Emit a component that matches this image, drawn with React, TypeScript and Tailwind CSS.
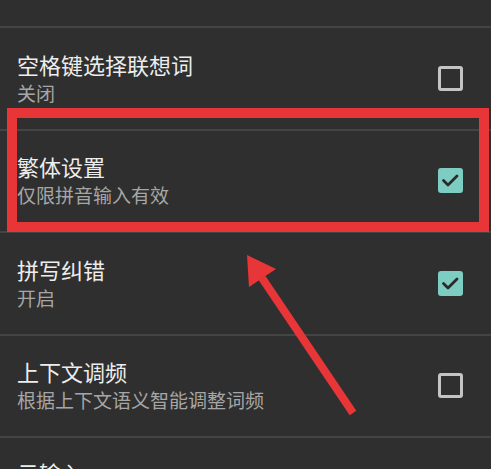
import React from "react";

type Setting = {
  title: string;
  summary: string;
  checked: boolean;
};

const settings: Setting[] = [
  { title: "空格键选择联想词", summary: "关闭", checked: false },
  { title: "繁体设置", summary: "仅限拼音输入有效", checked: true },
  { title: "拼写纠错", summary: "开启", checked: true },
  { title: "上下文调频", summary: "根据上下文语义智能调整词频", checked: false },
];

function CheckBox({ checked }: { checked: boolean }) {
  if (checked) {
    return (
      <div className="w-[25px] h-[25px] rounded-[3px] bg-[#7ecdc3]">
        <svg width="25" height="25" viewBox="0 0 25 25" fill="none">
          <path
            d="M5.5 12.5 L10 17 L19 8"
            stroke="#2a2a2a"
            strokeWidth="2.8"
            strokeLinecap="round"
            strokeLinejoin="round"
          />
        </svg>
      </div>
    );
  }
  return (
    <div className="w-[25px] h-[25px] rounded-[3px] border-[3px] border-[#c4c4c4]" />
  );
}

function SettingRow({ item }: { item: Setting }) {
  return (
    <div className="h-[102.5px] border-b-2 border-[#444444] flex items-center justify-between pl-[17px] pr-[28px]">
      <div className="flex flex-col">
        <span className="text-[22px] leading-[29px] text-[#ededed]">
          {item.title}
        </span>
        <span className="text-[19px] leading-[28px] text-[#a6a6a6]">
          {item.summary}
        </span>
      </div>
      <CheckBox checked={item.checked} />
    </div>
  );
}

export default function App() {
  return (
    <div
      className="relative w-[491px] h-[469px] overflow-hidden bg-[#2f2f2f]"
      style={{ fontFamily: '"Noto Sans CJK SC", "Noto Sans", sans-serif' }}
    >
      {/* previous item, mostly scrolled out */}
      <div className="h-[28px] border-b-2 border-[#444444] overflow-hidden pl-[17px]">
        <div className="-mt-[23px] text-[19px] leading-[26px] text-[#a6a6a6]">
          开启后可输入 生僻字与符号
        </div>
      </div>

      {settings.map((s) => (
        <SettingRow key={s.title} item={s} />
      ))}

      <div className="pl-[17px] pt-[20px]">
        <span className="text-[22px] leading-[28px] text-[#ededed]">云输入</span>
      </div>

      {/* annotation: highlight box */}
      <div className="absolute left-[7px] top-[108px] w-[482px] h-[124px] border-[10px] border-[#e83638]" />

      {/* annotation: arrow */}
      <svg
        className="absolute left-0 top-0"
        width="491"
        height="469"
        viewBox="0 0 491 469"
      >
        <line
          x1="262"
          y1="278"
          x2="353"
          y2="413"
          stroke="#e83638"
          strokeWidth="8"
        />
        <polygon points="247,255 276,269 249,287" fill="#e83638" />
      </svg>
    </div>
  );
}
